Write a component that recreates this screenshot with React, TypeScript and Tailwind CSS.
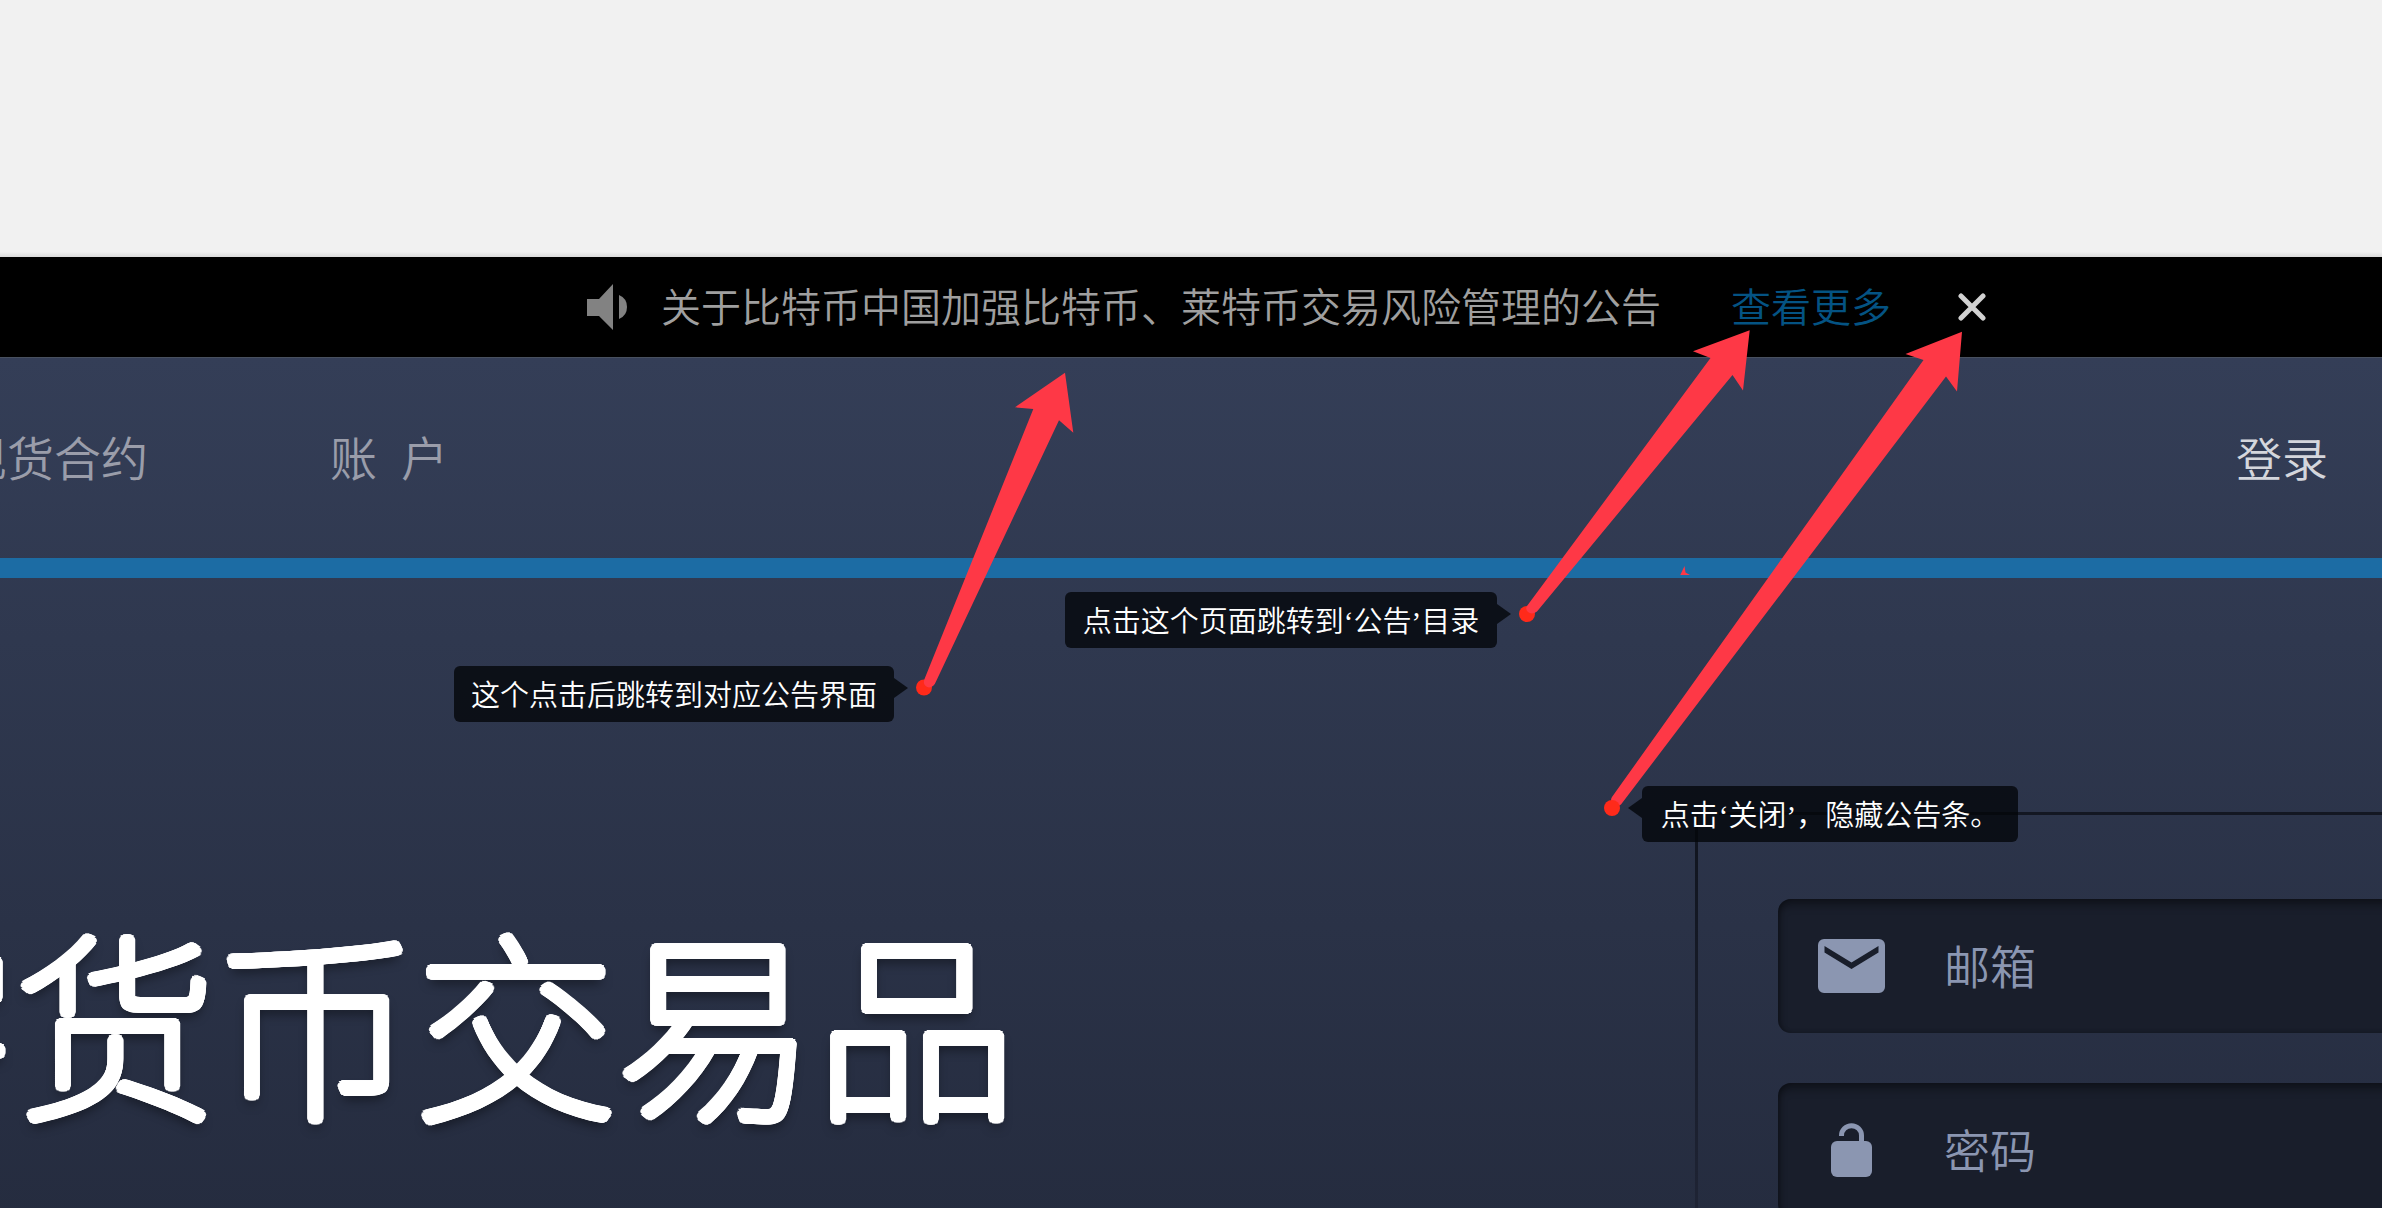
import { useState } from "react";
import type { ReactNode } from "react";

// A ring of solid copies rounds the stroke ends of the thin headline face; the last layer is the soft shade below it.
function roundedStroke(radius: number) {
  const ring = Array.from({ length: 24 }, (_, i) => {
    const angle = (i * Math.PI) / 12;
    return `${(Math.cos(angle) * radius).toFixed(2)}px ${(Math.sin(angle) * radius).toFixed(2)}px 0 #fff`;
  });
  return [...ring, "0 7px 12px rgba(0,0,0,0.75)"].join(", ");
}

function SpeakerIcon() {
  return (
    <svg viewBox="0 0 40 46" className="h-[46px] w-10 shrink-0 fill-[#828282]" aria-hidden="true">
      <path d="M0 15h12L26 0v46L12 32H0z" />
      <path d="M32 11a13 13 0 0 1 0 24z" />
    </svg>
  );
}

function EnvelopeIcon({ label }: { label: string }) {
  return (
    <svg viewBox="0 0 67 54" className="h-[54px] w-[67px] fill-[#8b96b1]" role="img" aria-label={label}>
      <path
        fillRule="evenodd"
        d="M6 0h55a6 6 0 0 1 6 6v42a6 6 0 0 1-6 6H6a6 6 0 0 1-6-6V6a6 6 0 0 1 6-6zM6.500 7v6.500L33.500 30 60.500 13.500V7L33.500 23.500z"
      />
    </svg>
  );
}

function UnlockIcon({ label }: { label: string }) {
  return (
    <svg viewBox="0 0 41 54" className="h-[54px] w-[41px] fill-[#8b96b1]" role="img" aria-label={label}>
      <rect y="18" width="41" height="36" rx="6" />
      <path d="M10.500 13v-.5a10 9.800 0 0 1 20 0V20" fill="none" stroke="#8b96b1" strokeWidth="5" />
    </svg>
  );
}

function Field({ id, type, label, icon }: { id: string; type: string; label: string; icon: ReactNode }) {
  return (
    <div className="flex h-[134px] items-center rounded-l-[13px] bg-[#191e2b] shadow-[inset_0_6px_8px_rgba(0,0,0,0.35),inset_2px_0_4px_rgba(0,0,0,0.25)]">
      <label htmlFor={id} className="flex w-[166px] shrink-0 items-center pl-10">
        <span className="flex w-[67px] justify-center">{icon}</span>
      </label>
      <input
        id={id}
        type={type}
        placeholder={label}
        className="h-full min-w-0 flex-1 bg-transparent text-[46px] font-[350] text-[#8b96b1] outline-none placeholder:text-[#8b96b1]"
      />
    </div>
  );
}

function Note({ className, side, children }: { className: string; side: "left" | "right"; children: ReactNode }) {
  return (
    <div
      role="note"
      className={`absolute flex h-14 items-center justify-center whitespace-nowrap rounded-md bg-[#04060a]/80 pt-1 font-['Liberation_Serif','Noto_Sans_CJK_SC',sans-serif] text-[29px] leading-10 font-[350] text-white ${className}`}
    >
      {children}
      <svg
        viewBox="0 0 14 20"
        className={`absolute top-3 h-5 w-[14px] fill-[#04060a]/80 ${side === "right" ? "left-full" : "right-full -scale-x-100"}`}
        aria-hidden="true"
      >
        <path d="M0 0l14 10L0 20z" />
      </svg>
    </div>
  );
}

function Arrows() {
  return (
    <svg viewBox="0 0 2382 1208" className="pointer-events-none absolute left-0 top-0 h-[1208px] w-[2382px]" aria-hidden="true">
      <g fill="#ff2a1a">
        <circle cx="924" cy="687.500" r="8" />
        <circle cx="1527" cy="614" r="8" />
      </g>
      <g fill="#fe3846">
        <path d="M1065 372.700L1073.300 432.700 1059 420.300 936 681.500Q934 687 929 687.500 922 686 924.500 679L1033.300 409 1015 407.300z" />
        <path d="M1749.700 330.300L1743 390.500 1732.500 375 1537 611.500Q1532 615 1528 612 1525 609 1527 606L1710.500 358 1693 351.300z" />
        <path d="M1962 331.700L1957 391.500 1946 376.500 1621 804.500Q1616 808 1612 804 1610 800 1612 797L1923.500 360 1905.500 354z" />
        <path d="M1684.500 566L1685.500 572.500 1690 575H1680.300z" />
      </g>
      <circle cx="1612" cy="808" r="8" fill="#ff2a1a" />
    </svg>
  );
}

export default function App() {
  const [open, setOpen] = useState(true);
  return (
    <div className="relative flex min-h-screen flex-col overflow-hidden bg-[#f1f1f1] font-['Noto_Sans','Noto_Sans_CJK_SC',sans-serif]">
      <div className="h-[257px] shrink-0 bg-linear-to-b from-[#f1f1f1] from-98% to-[#dcdcdc]" />
      {open && (
        <div className="flex h-[100px] shrink-0 items-center bg-black pl-[587px] text-[40px] font-[350]">
          <SpeakerIcon />
          <p className="ml-[34px] whitespace-nowrap text-[#9f9f9f]">关于比特币中国加强比特币、莱特币交易风险管理的公告</p>
          <a href="#more" className="ml-[70px] whitespace-nowrap text-[#045383]">
            查看更多
          </a>
          <button type="button" aria-label="关闭" onClick={() => setOpen(false)} className="ml-[67px]">
            <svg viewBox="0 0 28 28" className="h-7 w-7" fill="none" stroke="#d2d2d2" strokeWidth="5" strokeLinecap="round" aria-hidden="true">
              <path d="M3 3l22 22M25 3L3 25" />
            </svg>
          </button>
        </div>
      )}
      <div className="flex flex-1 flex-col overflow-hidden bg-linear-to-b from-[#343e57] to-[#252c3f]">
        <header className="flex h-[221px] shrink-0 items-center justify-between border-b-20 border-t border-b-[#1c6ca4] border-t-[#48505f] font-[350]">
          <nav className="-ml-10 flex gap-[182px] whitespace-nowrap text-[47px] text-[#9a9daa]">
            <a href="#spot">现货合约</a>
            <a href="#account" className="flex gap-6">
              <span>账</span>
              <span>户</span>
            </a>
          </nav>
          <a href="#login" className="mr-[54px] text-[46px] text-[#d4d6dc]">
            登录
          </a>
        </header>
        <main className="flex flex-1 justify-between">
          <h1
            className="-ml-[384px] mt-[300px] whitespace-nowrap text-[200px] font-thin leading-[300px] text-white"
            style={{ textShadow: roundedStroke(5) }}
          >
            数字货币交易品
          </h1>
          <form className="mt-[234px] flex w-[687px] shrink-0 flex-col">
            <div className="ml-6 h-[3px] shrink-0 bg-[#131722]" />
            <div className="flex flex-1">
              <div className="w-[3px] shrink-0 bg-linear-to-b from-[#10141e] to-[#1f2435]" />
              <div className="flex flex-1 flex-col gap-[50px] pl-[80px] pt-[84px]">
                <Field id="email" type="email" label="邮箱" icon={<EnvelopeIcon label="邮箱" />} />
                <Field id="password" type="password" label="密码" icon={<UnlockIcon label="密码" />} />
              </div>
            </div>
          </form>
        </main>
      </div>
      <Arrows />
      <Note side="right" className="left-[454px] top-[666px] w-[440px]">
        这个点击后跳转到对应公告界面
      </Note>
      <Note side="right" className="left-[1065px] top-[592px] w-[432px]">
        点击这个页面跳转到‘公告’目录
      </Note>
      <Note side="left" className="left-[1642px] top-[786px] w-[376px]">
        点击‘关闭’，隐藏公告条。
      </Note>
    </div>
  );
}
